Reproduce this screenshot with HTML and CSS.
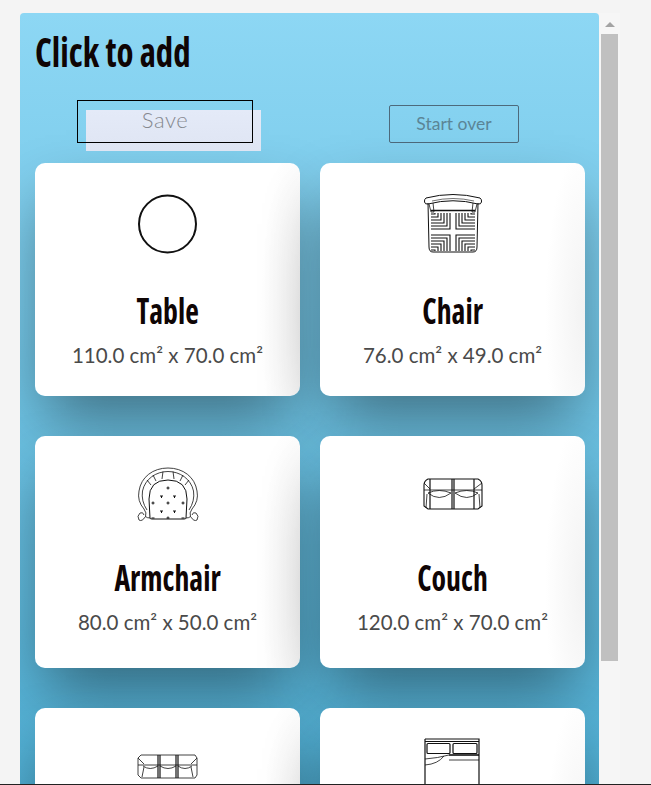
FILE: index.html
```html
<!DOCTYPE html>
<html lang="en">
<head>
    <meta charset="UTF-8">
    <meta name="viewport" content="width=device-width, initial-scale=1.0">
    <title>Click to add</title>
    <link rel="stylesheet" href="styles.css">
</head>
<body>
    <div class="window">
        <!-- furniture panel -->
        <main class="panel">
            <h1 class="panel-title">Click to add</h1>

            <div class="actions">
                <button class="btn-save">Save</button>
                <button class="btn-reset">Start over</button>
            </div>

            <div class="cards">
                <!-- table -->
                <div class="card card-first">
                    <svg class="icon" viewBox="0 0 60 60">
                        <circle cx="29.5" cy="31" r="28.5" stroke-width="2"/>
                    </svg>
                    <h2 class="card-title">Table</h2>
                    <p class="card-size">110.0 cm² x 70.0 cm²</p>
                </div>

                <!-- chair -->
                <div class="card card-first">
                    <svg class="icon" viewBox="0 0 60 60">
                        <path d="M3 5Q30 -2 57 5Q59 6.500 58.500 9Q58 11.500 55 11Q30 4.500 5 11Q2 11.500 1.500 9Q1 6.500 3 5Z" stroke-width="1"/>
                        <path d="M9 8Q30 3 51 8" stroke-width="0.600"/>
                        <path d="M6 11L8 19H11L10 10M54 11L52 19H49L50 10"/>
                        <path d="M8 17.500H52" stroke-width="1.400"/>
                        <path d="M5 10L6 54Q6 59 10 59H50Q54 59 54 54L55 10" stroke-width="1"/>
                        <g id="chair-seat">
                            <path d="M27 20V36H8M24 20V33H8M21 20V30H8M18 20V27H8M15 20V24H8M12 20V21H8" stroke-width="1.100"/>
                        </g>
                        <use href="#chair-seat" transform="matrix(-1 0 0 1 60 0)"/>
                        <use href="#chair-seat" transform="matrix(1 0 0 -1 0 78)"/>
                        <use href="#chair-seat" transform="matrix(-1 0 0 -1 60 78)"/>
                    </svg>
                    <h2 class="card-title">Chair</h2>
                    <p class="card-size">76.0 cm² x 49.0 cm²</p>
                </div>

                <!-- armchair -->
                <div class="card">
                    <svg class="icon" viewBox="0 0 60 60">
                        <path d="M6 43Q-1 35 1 25C3 11 15 2 30 2C45 2 57 11 59 25Q61 35 54 43"/>
                        <path d="M9 44Q3 35 4.500 25C7 13 18 5.500 30 5.500C42 5.500 53 13 55.500 25Q57 35 51 44"/>
                        <path d="M6 43Q9 47 7.500 50.500Q4 56 1 54Q-1.500 50 2 47Q5 45.500 6 49M54 43Q51 47 52.500 50.500Q56 56 59 54Q61.500 50 58 47Q55 45.500 54 49M7.500 50.500Q9 52 12 52M52.500 50.500Q51 52 48 52"/>
                        <path d="M13 19L9 14M18 15L15 9M24 13L25 5.500M36 13L35 5.500M42 15L45 9M47 19L51 14"/>
                        <path d="M12 52L11 33Q11 14 30 14Q49 14 49 33L48 52Q48 53 46 53H14Q12 53 12 52Z" stroke-width="1"/>
                        <path class="tufts" d="M28.500 22H31.500M30 20.500V23.500M13.500 37H16.500M15 35.500V38.500M28.500 37H31.500M30 35.500V38.500M43.500 37H46.500M45 35.500V38.500M22 30H25M23.500 30V32M35 30H38M36.500 30V32M22 45H25M23.500 45V47M35 45H38M36.500 45V47M28.500 52H31.500M30 50.500V52.500M13.500 52H16.500M43.500 52H46.500"/>
                    </svg>
                    <h2 class="card-title">Armchair</h2>
                    <p class="card-size">80.0 cm² x 50.0 cm²</p>
                </div>

                <!-- couch -->
                <div class="card">
                    <svg class="icon" viewBox="0 0 60 60">
                        <path d="M5 13H55Q59 15 59 19V40L55 43H5L1 40V19Q1 15 5 13Z" stroke-width="1.100"/>
                        <path d="M7 13V43M29 13V43M31 13V43M51 13V43" stroke-width="1.200"/>
                        <path d="M1 24H59M1 17L7 23M59 17L51 23"/>
                        <path d="M5 27Q16 22 28 27Q16 36 5 27ZM32 27Q44 22 55 27Q44 36 32 27ZM4 28L3 42M56 28L57 42"/>
                    </svg>
                    <h2 class="card-title">Couch</h2>
                    <p class="card-size">120.0 cm² x 70.0 cm²</p>
                </div>

                <!-- sofa -->
                <div class="card">
                    <svg class="icon" viewBox="0 0 60 60">
                        <path d="M3 17H57L59 20V37L57 40H3L0 37V20Z"/>
                        <path d="M20 17V40M22 17V40M38 17V40M40 17V40" stroke-width="1.200"/>
                        <path d="M0 27H59M0 20L6 26M59 20L53 26"/>
                        <path d="M5 28Q12 33 20 28M22 28Q30 33 38 28M40 28Q47 33 54 28M6 29L4 39M53 29L55 39"/>
                    </svg>
                </div>

                <!-- bed -->
                <div class="card">
                    <svg class="icon" viewBox="0 0 60 60">
                        <path d="M2 1H56V60M2 1V60M2 3.500H56" stroke-width="1.200"/>
                        <rect x="4" y="5.500" width="23" height="10" rx="1" stroke-width="1.200"/>
                        <rect x="30" y="5.500" width="24" height="10" rx="1" stroke-width="1.200"/>
                        <path d="M26 17H56" stroke-width="1.600"/>
                        <path d="M26 22H56M2 21Q15 20 26 17M2 27Q15 26 21 18"/>
                    </svg>
                </div>
            </div>
        </main>

        <!-- scrollbar of the panel -->
        <div class="scrollbar">
            <span class="scrollbar-arrow"></span>
            <span class="scrollbar-thumb"></span>
        </div>
    </div>

    <div class="page-line"></div>
</body>
</html>
```

FILE: styles.css
```css
body {
    margin: 0;
    height: 100vh;
    overflow: hidden;
    display: flex;
    flex-direction: column;
    background-color: #f4f4f4;
    font-family: "Lato", sans-serif;
}

.window {
    flex: 1;
    min-height: 0;
    display: flex;
    padding: 13px 0 0 20px;
}

.panel {
    width: 579px;
    padding: 15px 14px 0 15px;
    box-sizing: border-box;
    overflow: hidden;
    border-radius: 4px 4px 0 0;
    background: linear-gradient(180deg, #8dd7f4, #50afd4);
}

/* no condensed family is installed, so the headings get squeezed a bit more */
.panel-title {
    margin: 0;
    height: 50px;
    line-height: 46px;
    font-family: "Open Sans", sans-serif;
    font-stretch: 75%;
    font-size: 41px;
    font-weight: 700;
    color: #0f0505;
    transform: scaleX(0.85);
    transform-origin: left center;
}

/* save and start over */
.actions {
    display: flex;
    align-items: flex-end;
    margin-top: 22px;
}

.btn-save {
    position: relative;
    z-index: 0;
    width: 176px;
    height: 43px;
    margin-left: 42px;
    padding: 0 0 4px;
    border: 0;
    background: none;
    font-family: inherit;
    font-size: 22px;
    font-weight: 300;
    letter-spacing: 0.5px;
    color: #85888f;
}

/* pale block sits behind the outline, a bit lower and to the right */
.btn-save::before {
    content: "";
    position: absolute;
    z-index: -1;
    top: 10px;
    left: 9px;
    width: 175px;
    height: 41px;
    background: linear-gradient(180deg, #e4eaf8, #dfe5f3);
}

.btn-save::after {
    content: "";
    position: absolute;
    inset: 0;
    border: 1px solid #000;
}

.btn-reset {
    width: 130px;
    height: 38px;
    margin-left: 136px;
    padding: 0 0 2px;
    border: 1px solid #4d6a7c;
    border-radius: 2px;
    background: none;
    font-family: inherit;
    font-size: 17.5px;
    color: #5b8596;
}

/* furniture cards */
.cards {
    display: grid;
    grid-template-columns: 265px 265px;
    grid-auto-rows: 232.5px;
    gap: 40px 20px;
    margin-top: 20px;
}

.card {
    display: flex;
    flex-direction: column;
    align-items: center;
    padding-top: 30px;
    box-sizing: border-box;
    border-radius: 10px;
    background: radial-gradient(ellipse 40px 170px at 100% 65%, #f2f2f2, #fff);
    box-shadow: 0 30px 60px -10px rgba(0, 0, 0, 0.45);
}

.icon {
    flex: none;
    width: 60px;
    height: 60px;
    fill: none;
    stroke: #111;
    stroke-width: 0.8;
    overflow: visible;
}

.tufts {
    stroke-width: 1;
}

.card-title {
    margin: 32px 0 0;
    line-height: 40px;
    font-family: "Open Sans", sans-serif;
    font-stretch: 75%;
    font-size: 35px;
    font-weight: 700;
    color: #0f0505;
    transform: scaleX(0.85);
}

.card-first .card-title {
    margin-top: 38px;
}

.card-size {
    margin: 12px 0 0;
    line-height: 24px;
    font-size: 20.5px;
    color: #4a4a4a;
}

/* scrollbar */
.scrollbar {
    flex: none;
    width: 21px;
    display: flex;
    flex-direction: column;
    align-items: center;
    background-color: #f6f6f6;
}

.scrollbar-arrow {
    width: 0;
    height: 0;
    margin-top: 9px;
    border-left: 5px solid transparent;
    border-right: 5px solid transparent;
    border-bottom: 5px solid #a3a3a3;
}

.scrollbar-thumb {
    width: 17px;
    height: 627px;
    margin-top: 7px;
    background-color: #c0c0c0;
}

.page-line {
    flex: none;
    height: 1px;
    background-color: #222;
}
```
